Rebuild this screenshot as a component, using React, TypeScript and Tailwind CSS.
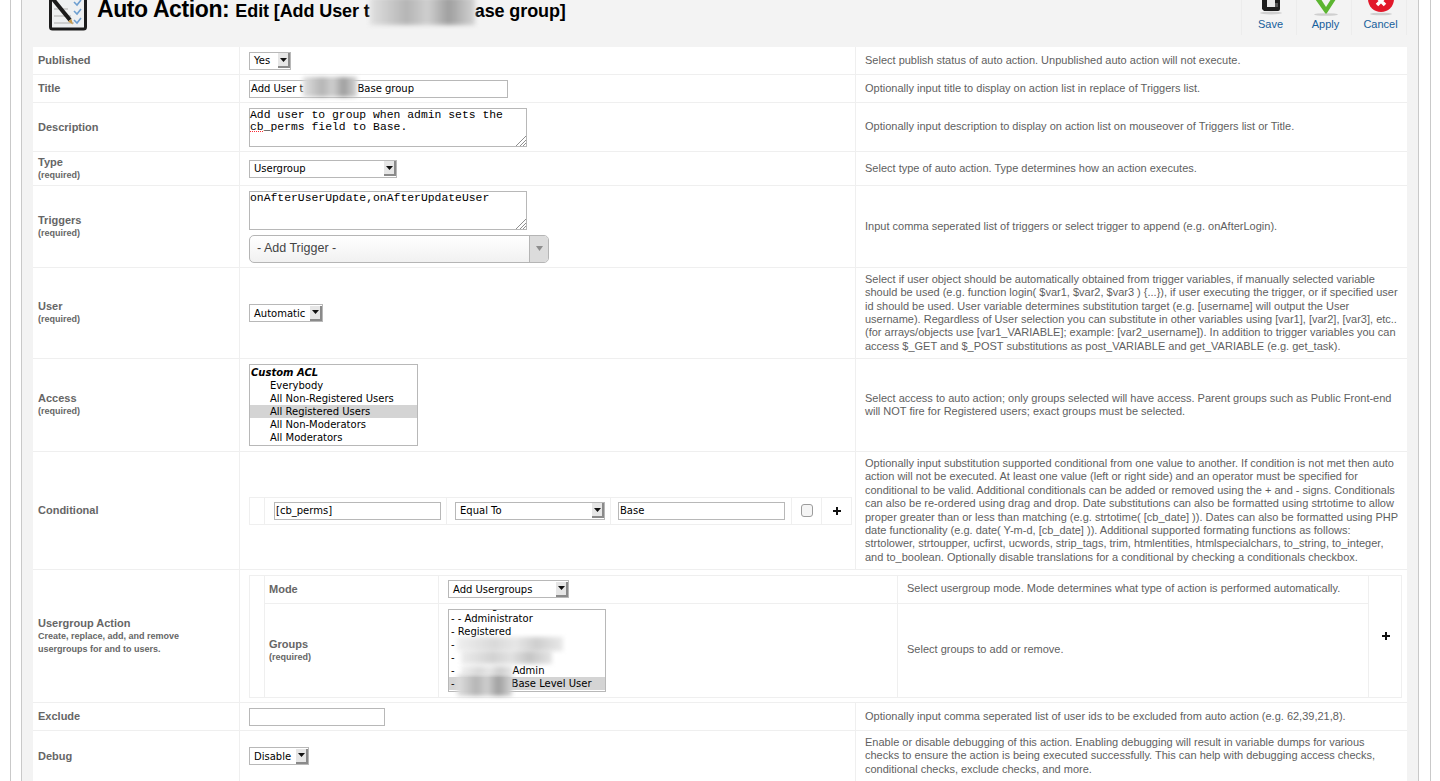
import type { ReactNode } from "react";

const controlFont = "font-['DejaVu_Sans',sans-serif] text-[10px] text-black";

function Arrow() {
  return (
    <span className="flex h-[15px] w-[12px] shrink-0 items-center justify-center border-r-2 border-b-2 border-[#8a8a8a] bg-[#e6e6e6]">
      <svg width="7" height="4" viewBox="0 0 7 4">
        <path d="M0 0h7L3.5 4z" fill="#111" />
      </svg>
    </span>
  );
}

function Select({ label, width }: { label: string; width: string }) {
  return (
    <div className={`${width} ${controlFont} flex h-[18px] items-center justify-between border border-[#b8b8b8] bg-white pl-[4px]`}>
      <span className="whitespace-nowrap">{label}</span>
      <Arrow />
    </div>
  );
}

function TextBox({ width, children }: { width: string; children?: ReactNode }) {
  return (
    <div className={`${width} ${controlFont} flex h-[18px] items-center border border-[#b8b8b8] bg-white pl-[1px] whitespace-nowrap`}>
      {children}
    </div>
  );
}

function TextArea({ children }: { children: ReactNode }) {
  return (
    <div className="relative h-[39px] w-[278px] border border-[#b8b8b8] bg-white font-['Liberation_Mono',monospace] text-[11.4px] leading-[12px] text-black">
      {children}
      <svg className="absolute right-0 bottom-0" width="11" height="11" viewBox="0 0 11 11">
        <path d="M11 1L1 11M11 5L5 11M11 8L8 11" stroke="#8f8f8f" strokeWidth="1" />
      </svg>
    </div>
  );
}

// blurred-out patches from the original screenshot
function Smudge({ width, className = "" }: { width: string; className?: string }) {
  return (
    <span
      className={`${width} ${className} inline-block shrink-0 bg-[linear-gradient(90deg,#e0e0e0,#b5b5b5_35%,#cfcfcf_55%,#9f9f9f_75%,#d4d4d4)] blur-[2px]`}
    />
  );
}

function Label({ title, sub }: { title: string; sub?: string[] }) {
  return (
    <div className="font-['Liberation_Sans',sans-serif] text-[#666]">
      <div className="text-[11px] leading-[13px] font-bold">{title}</div>
      {sub?.map((line) => (
        <div key={line} className="text-[9px] leading-[12.5px] font-bold">
          {line}
        </div>
      ))}
    </div>
  );
}

function Help({ lines }: { lines: string[] }) {
  return (
    <div className="font-['Liberation_Sans',sans-serif] text-[11px] leading-[13.4px] whitespace-nowrap text-[#5f5f5f]">
      {lines.map((line) => (
        <div key={line}>{line}</div>
      ))}
    </div>
  );
}

function Row({
  height,
  label,
  help,
  last,
  children,
}: {
  height: string;
  label: ReactNode;
  help: string[];
  last?: boolean;
  children: ReactNode;
}) {
  return (
    <div className={`${height} ${last ? "" : "border-b border-[#efefef]"} flex`}>
      <div className="flex w-[206px] shrink-0 items-center pl-[5px]">{label}</div>
      <div className="flex w-[616px] shrink-0 flex-col justify-center gap-[5px] border-l border-[#efefef] pl-[9px]">
        {children}
      </div>
      <div className="flex flex-1 items-center border-l border-[#efefef] pl-[9px]">
        <Help lines={help} />
      </div>
    </div>
  );
}

function Plus() {
  return (
    <svg width="8" height="8" viewBox="0 0 8 8">
      <path d="M4 0v8M0 4h8" stroke="#111" strokeWidth="2" />
    </svg>
  );
}

function Logo() {
  return (
    <svg className="mt-[-8px] ml-[14px] shrink-0" width="41" height="41" viewBox="0 0 41 41">
      <rect x="3.5" y="-4" width="35" height="41" rx="2" fill="#eef0f1" stroke="#1c1c1c" strokeWidth="3" />
      <path d="M7 17h14M7 24h17M7 31h20" stroke="#c4c4c4" strokeWidth="1.5" />
      <path d="M5 6L23 28" stroke="#1b1b1b" strokeWidth="4" />
      <path d="M21 29.500l5 3-1.500-5.500z" fill="#c79a4a" />
      <path d="M27 10l3 3 4-5M27 19l3 3 4-5M27 28l3 3 4-5" fill="none" stroke="#6e9fd0" strokeWidth="1.6" />
    </svg>
  );
}

function Tool({ label, children }: { label: string; children: ReactNode }) {
  return (
    <div className="flex h-[35px] w-[55px] flex-col items-center border-r border-[#ececec] pl-[3px] font-['Liberation_Sans',sans-serif] text-[11px] leading-[13px] text-[#17609b]">
      <div className="flex h-[17px] w-full items-start justify-center">{children}</div>
      <span className="mt-[1px]">{label}</span>
    </div>
  );
}

export default function App() {
  return (
    <div className="h-[781px] w-[1440px] overflow-hidden bg-white pl-[10px]">
      <div className="h-full w-[1421px] border-x border-[#c9c9c9] px-[10px]">
        <div className="h-full w-[1398px] border-x border-[#c9c9c9] bg-[#f3f3f3] pl-[11px]">
          {/* Toolbar header */}
          <div className="flex h-[47px] w-[1374px] items-start">
            <Logo />
            <div className="mt-[-5px] ml-[9px] flex items-baseline font-['Liberation_Sans',sans-serif] font-bold whitespace-nowrap text-black">
              <span className="text-[23px] leading-[28px] tracking-[-0.4px]">Auto Action:</span>
              <span className="ml-[6px] flex items-baseline text-[18px] leading-[28px] tracking-[-0.1px]">
                Edit [Add User t
                <Smudge width="w-[105px]" className="h-[28px] self-start" />
                ase group]
              </span>
            </div>
            <div className="ml-auto flex border-l border-[#ececec]">
              <Tool label="Save">
                <svg width="24" height="15" viewBox="0 0 24 15">
                  <ellipse cx="12" cy="13" rx="11" ry="1.5" fill="#cfcfcf" />
                  <path d="M3 -8h18v17q0 2-2 2H5l-2-2z" fill="#1d1d1d" />
                  <rect x="8" y="-6" width="8" height="13" fill="#e9e9e9" />
                  <rect x="16" y="3" width="3" height="4" fill="#555" />
                </svg>
              </Tool>
              <Tool label="Apply">
                <svg width="28" height="16" viewBox="0 0 28 16">
                  <ellipse cx="14" cy="14.500" rx="12" ry="1.300" fill="#cfcfcf" />
                  <path d="M1 -4L13 13Q14 14.500 15 13L26 -4z" fill="#5cb531" />
                  <path d="M7 -4L14 7 21 -4z" fill="#f3f3f3" />
                </svg>
              </Tool>
              <Tool label="Cancel">
                <svg width="28" height="16" viewBox="0 0 28 16">
                  <ellipse cx="14" cy="14" rx="11" ry="1.300" fill="#cfcfcf" />
                  <circle cx="14" cy="-1" r="13" fill="#e2182a" />
                  <path d="M10 -3l8 8M18 -3l-8 8" stroke="#fff" strokeWidth="3.500" />
                </svg>
              </Tool>
            </div>
          </div>

          {/* Form */}
          <div className="h-[734px] w-[1374px] bg-white">
            <Row
              height="h-[28px]"
              label={<Label title="Published" />}
              help={["Select publish status of auto action. Unpublished auto action will not execute."]}
            >
              <Select label="Yes" width="w-[42px]" />
            </Row>
            <Row
              height="h-[28px]"
              label={<Label title="Title" />}
              help={["Optionally input title to display on action list in replace of Triggers list."]}
            >
              <TextBox width="w-[259px]">
                Add User t
                <Smudge width="w-[54px]" className="mt-[-3px] h-[20px]" />
                Base group
              </TextBox>
            </Row>
            <Row
              height="h-[49px]"
              label={<Label title="Description" />}
              help={["Optionally input description to display on action list on mouseover of Triggers list or Title."]}
            >
              <TextArea>
                Add user to group when admin sets the
                <br />
                <span className="underline decoration-red-500 decoration-dotted">cb</span>_perms field to Base.
              </TextArea>
            </Row>
            <Row
              height="h-[34px]"
              label={<Label title="Type" sub={["(required)"]} />}
              help={["Select type of auto action. Type determines how an action executes."]}
            >
              <Select label="Usergroup" width="w-[148px]" />
            </Row>
            <Row
              height="h-[82px]"
              label={<Label title="Triggers" sub={["(required)"]} />}
              help={["Input comma seperated list of triggers or select trigger to append (e.g. onAfterLogin)."]}
            >
              <TextArea>onAfterUserUpdate,onAfterUpdateUser</TextArea>
              <div className="flex h-[28px] w-[300px] items-center overflow-hidden rounded-[5px] border border-[#b5b5b5] bg-[linear-gradient(#fff,#f1f1f1)] font-['Liberation_Sans',sans-serif] text-[12.5px] text-[#444]">
                <span className="flex-1 pl-[7px]">- Add Trigger -</span>
                <span className="flex h-full w-[19px] items-center justify-center border-l border-[#b5b5b5] bg-[#dcdcdc]">
                  <svg width="7" height="5" viewBox="0 0 7 5">
                    <path d="M0 0h7L3.5 5z" fill="#8d8d8d" />
                  </svg>
                </span>
              </div>
            </Row>
            <Row
              height="h-[91px]"
              label={<Label title="User" sub={["(required)"]} />}
              help={[
                "Select if user object should be automatically obtained from trigger variables, if manually selected variable",
                "should be used (e.g. function login( $var1, $var2, $var3 ) {...}), if user executing the trigger, or if specified user",
                "id should be used. User variable determines substitution target (e.g. [username] will output the User",
                "username). Regardless of User selection you can substitute in other variables using [var1], [var2], [var3], etc..",
                "(for arrays/objects use [var1_VARIABLE]; example: [var2_username]). In addition to trigger variables you can",
                "access $_GET and $_POST substitutions as post_VARIABLE and get_VARIABLE (e.g. get_task).",
              ]}
            >
              <Select label="Automatic" width="w-[74px]" />
            </Row>
            <Row
              height="h-[93px]"
              label={<Label title="Access" sub={["(required)"]} />}
              help={[
                "Select access to auto action; only groups selected will have access. Parent groups such as Public Front-end",
                "will NOT fire for Registered users; exact groups must be selected.",
              ]}
            >
              <div className={`${controlFont} h-[82px] w-[169px] border border-[#b8b8b8] bg-white py-[1px] leading-[13px]`}>
                <div className="pl-[1px] font-bold italic">Custom ACL</div>
                <div className="pl-[20px]">Everybody</div>
                <div className="pl-[20px]">All Non-Registered Users</div>
                <div className="bg-[#d4d4d4] pl-[20px]">All Registered Users</div>
                <div className="pl-[20px]">All Non-Moderators</div>
                <div className="pl-[20px]">All Moderators</div>
              </div>
            </Row>
            <Row
              height="h-[118px]"
              label={<Label title="Conditional" />}
              help={[
                "Optionally input substitution supported conditional from one value to another. If condition is not met then auto",
                "action will not be executed. At least one value (left or right side) and an operator must be specified for",
                "conditional to be valid. Additional conditionals can be added or removed using the + and - signs. Conditionals",
                "can also be re-ordered using drag and drop. Date substitutions can also be formatted using strtotime to allow",
                "proper greater than or less than matching (e.g. strtotime( [cb_date] )). Dates can also be formatted using PHP",
                "date functionality (e.g. date( Y-m-d, [cb_date] )). Additional supported formating functions as follows:",
                "strtolower, strtoupper, ucfirst, ucwords, strip_tags, trim, htmlentities, htmlspecialchars, to_string, to_integer,",
                "and to_boolean. Optionally disable translations for a conditional by checking a conditionals checkbox.",
              ]}
            >
              <div className="flex h-[28px] w-[603px] border border-[#efefef]">
                <div className="w-[15px] shrink-0 border-r border-[#efefef]" />
                <div className="flex w-[182px] shrink-0 items-center border-r border-[#efefef] pl-[9px]">
                  <TextBox width="w-[167px]">[cb_perms]</TextBox>
                </div>
                <div className="flex w-[164px] shrink-0 items-center border-r border-[#efefef] pl-[8px]">
                  <Select label="Equal To" width="w-[150px]" />
                </div>
                <div className="flex w-[181px] shrink-0 items-center border-r border-[#efefef] pl-[7px]">
                  <TextBox width="w-[167px]">Base</TextBox>
                </div>
                <div className="flex w-[30px] shrink-0 items-center justify-center border-r border-[#efefef]">
                  <span className="h-[13px] w-[12px] rounded-[3px] border border-[#9c9c9c] bg-[#f5f5f5]" />
                </div>
                <div className="flex flex-1 items-center justify-center">
                  <Plus />
                </div>
              </div>
            </Row>

            {/* Usergroup Action spans the control and help columns */}
            <div className="flex h-[133px] border-b border-[#efefef]">
              <div className="flex w-[206px] shrink-0 items-center pl-[5px]">
                <Label
                  title="Usergroup Action"
                  sub={["Create, replace, add, and remove", "usergroups for and to users."]}
                />
              </div>
              <div className="flex flex-1 items-center border-l border-[#efefef] pl-[9px]">
                <div className="flex h-[123px] w-[1153px] border border-[#efefef]">
                  <div className="w-[15px] shrink-0 border-r border-[#efefef]" />
                  <div className="flex w-[1103px] shrink-0 flex-col">
                    <div className="flex h-[28px] shrink-0 border-b border-[#efefef]">
                      <div className="flex w-[173px] shrink-0 items-center pl-[4px]">
                        <Label title="Mode" />
                      </div>
                      <div className="flex w-[459px] shrink-0 items-center border-l border-[#efefef] pl-[9px]">
                        <Select label="Add Usergroups" width="w-[121px]" />
                      </div>
                      <div className="flex flex-1 items-center border-l border-[#efefef] pl-[9px]">
                        <Help lines={["Select usergroup mode. Mode determines what type of action is performed automatically."]} />
                      </div>
                    </div>
                    <div className="flex flex-1">
                      <div className="flex w-[173px] shrink-0 items-center pt-[1px] pl-[4px]">
                        <Label title="Groups" sub={["(required)"]} />
                      </div>
                      <div className="flex w-[459px] shrink-0 items-center border-l border-[#efefef] pl-[9px]">
                        <div className={`${controlFont} h-[83px] w-[158px] border border-[#b8b8b8] bg-white leading-[13px] whitespace-nowrap`}>
                          <div className="h-[2px] overflow-hidden pl-[2px]">
                            <div className="mt-[-11px]">- - Manager</div>
                          </div>
                          <div className="pl-[2px]">- - Administrator</div>
                          <div className="pl-[2px]">- Registered</div>
                          <div className="flex h-[13px] items-center pl-[2px]">
                            -<Smudge width="w-[106px]" className="ml-[2px] h-[14px] opacity-50" />
                          </div>
                          <div className="flex h-[13px] items-center pl-[2px]">
                            -<Smudge width="w-[91px]" className="ml-[6px] h-[13px] opacity-60" />
                          </div>
                          <div className="flex h-[13px] items-center pl-[2px]">
                            -<Smudge width="w-[52px]" className="ml-[6px] h-[9px] opacity-50" />
                            Admin
                          </div>
                          <div className="flex h-[13px] items-center bg-[#d4d4d4] pl-[2px]">
                            -<Smudge width="w-[55px]" className="ml-[2px] h-[21px] translate-y-[2px]" />
                            Base Level User
                          </div>
                        </div>
                      </div>
                      <div className="flex flex-1 items-center border-l border-[#efefef] pl-[9px]">
                        <Help lines={["Select groups to add or remove."]} />
                      </div>
                    </div>
                  </div>
                  <div className="flex flex-1 items-center justify-center border-l border-[#efefef] pl-[1px]">
                    <Plus />
                  </div>
                </div>
              </div>
            </div>

            <Row
              height="h-[28px]"
              label={<Label title="Exclude" />}
              help={["Optionally input comma seperated list of user ids to be excluded from auto action (e.g. 62,39,21,8)."]}
            >
              <TextBox width="w-[136px]" />
            </Row>
            <Row
              height="h-[50px]"
              last
              label={<Label title="Debug" />}
              help={[
                "Enable or disable debugging of this action. Enabling debugging will result in variable dumps for various",
                "checks to ensure the action is being executed successfully. This can help with debugging access checks,",
                "conditional checks, exclude checks, and more.",
              ]}
            >
              <Select label="Disable" width="w-[60px]" />
            </Row>
          </div>
        </div>
      </div>
    </div>
  );
}
